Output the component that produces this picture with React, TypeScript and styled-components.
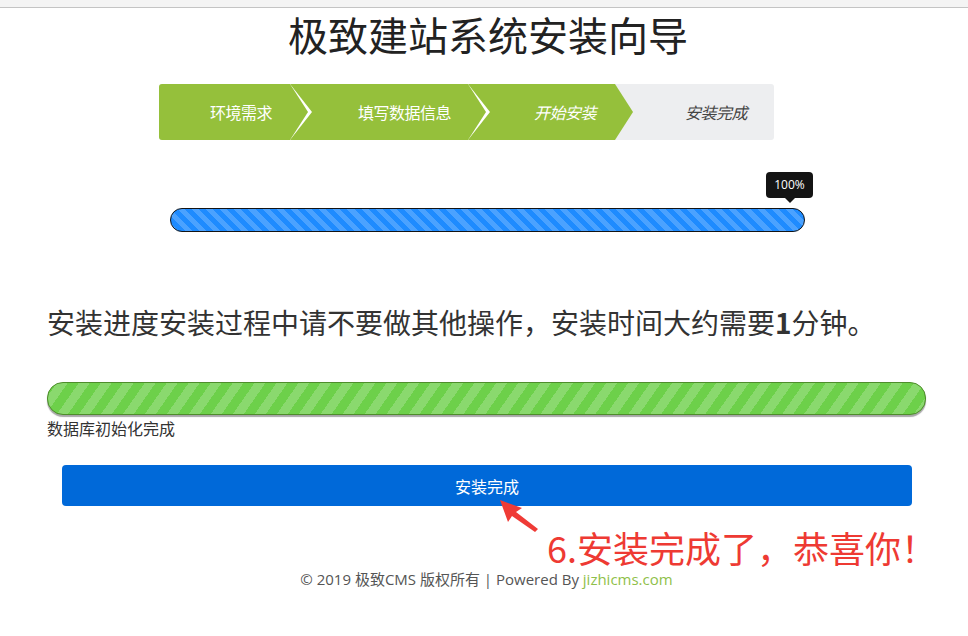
import React from 'react';
import styled, { createGlobalStyle } from 'styled-components';

const GlobalStyle = createGlobalStyle`
  html, body {
    margin: 0;
    padding: 0;
    background: #fff;
  }
  body {
    font-family: 'Open Sans', 'Noto Sans CJK SC', sans-serif;
    color: #333;
  }
`;

interface StepItem {
  label: string;
  width: number;
  padLeft: number;
  state: 'done' | 'current' | 'todo';
}

const steps: StepItem[] = [
  { label: '环境需求', width: 131, padLeft: 51, state: 'done' },
  { label: '填写数据信息', width: 178, padLeft: 68, state: 'done' },
  { label: '开始安装', width: 147, padLeft: 66, state: 'current' },
  { label: '安装完成', width: 159, padLeft: 70, state: 'todo' },
];

export default function App() {
  return (
    <Page>
      <GlobalStyle />
      <TopStrip />
      <Title>极致建站系统安装向导</Title>
      <Container>
        <StepBar>
          {steps.map((s, i) => (
            <Step
              key={s.label}
              $width={s.width}
              $padLeft={s.padLeft}
              $state={s.state}
              $layer={steps.length - i}
              $nextTodo={steps[i + 1]?.state === 'todo'}
            >
              {s.label}
            </Step>
          ))}
        </StepBar>

        <BlueTrack>
          <Tooltip>100%</Tooltip>
        </BlueTrack>

        <Notice>
          安装进度安装过程中请不要做其他操作，安装时间大约需要<strong>1</strong>分钟。
        </Notice>

        <GreenTrack />
        <StatusText>数据库初始化完成</StatusText>

        <FinishButton type='button'>安装完成</FinishButton>

        <Footer>
          © 2019 极致CMS 版权所有 | Powered By <FooterLink>jizhicms.com</FooterLink>
        </Footer>
      </Container>

      <Arrow width='60' height='50' viewBox='0 0 60 50'>
        <polygon points='0,0 22,8 16,12 38,29 35,32 12,16 8,22' fill='#ef3b36' />
      </Arrow>
      <Annotation>6.安装完成了，恭喜你！</Annotation>
    </Page>
  );
}

const Page = styled.div`
  position: relative;
  width: 968px;
  height: 636px;
  overflow: hidden;
`;

const TopStrip = styled.div`
  height: 7px;
  background: #f4f4f4;
  border-bottom: 1px solid #c4c4c4;
`;

const Title = styled.h1`
  margin: 2px 0 0;
  font-family: 'Noto Sans CJK SC', sans-serif;
  font-size: 40px;
  line-height: 48px;
  font-weight: 400;
  color: #222;
  text-align: center;
  padding-left: 8px;
`;

const Container = styled.div`
  width: 879px;
  margin-left: 47px;
  display: flex;
  flex-direction: column;
`;

const StepBar = styled.div`
  margin: 26px 0 0 112px;
  width: 615px;
  height: 56px;
  display: flex;
  border-radius: 3px;
  overflow: hidden;
  background: #edeef0;
`;

const Step = styled.div<{
  $width: number;
  $padLeft: number;
  $state: 'done' | 'current' | 'todo';
  $layer: number;
  $nextTodo: boolean;
}>`
  position: relative;
  flex: none;
  box-sizing: border-box;
  width: ${({ $width }) => $width}px;
  padding-left: ${({ $padLeft }) => $padLeft}px;
  display: flex;
  align-items: center;
  font-family: 'Noto Sans CJK SC', sans-serif;
  font-size: 16px;
  letter-spacing: -0.5px;
  font-style: ${({ $state }) => ($state === 'done' ? 'normal' : 'italic')};
  color: ${({ $state }) => ($state === 'todo' ? '#444' : '#fff')};
  background: ${({ $state }) => ($state === 'todo' ? 'transparent' : '#95c03b')};
  z-index: ${({ $layer }) => $layer};

  &::before,
  &::after {
    content: '';
    display: ${({ $state }) => ($state === 'todo' ? 'none' : 'block')};
    position: absolute;
    top: 0;
    height: 100%;
    clip-path: polygon(0 0, 100% 50%, 0 100%);
  }
  &::before {
    right: -22px;
    width: 22px;
    background: ${({ $nextTodo }) => ($nextTodo ? 'transparent' : '#fff')};
  }
  &::after {
    right: -18px;
    width: 18px;
    background: #95c03b;
  }
`;

const BlueTrack = styled.div`
  position: relative;
  margin: 68px 0 0 123px;
  width: 635px;
  height: 24px;
  box-sizing: border-box;
  border: 1px solid #141414;
  border-radius: 12px;
  background-color: #1e8bff;
  background-image: repeating-linear-gradient(
    45deg,
    rgba(255, 255, 255, 0.2) 0 5px,
    transparent 5px 10px
  );
`;

const Tooltip = styled.div`
  position: absolute;
  right: -9px;
  bottom: calc(100% + 11px);
  width: 47px;
  height: 26px;
  border-radius: 4px;
  background: #141414;
  color: #fff;
  font-family: 'Open Sans', sans-serif;
  font-size: 12px;
  line-height: 26px;
  text-align: center;

  &::after {
    content: '';
    position: absolute;
    left: 50%;
    top: 100%;
    margin-left: -5px;
    border: 5px solid transparent;
    border-bottom: 0;
    border-top-color: #141414;
  }
`;

const Notice = styled.h3`
  margin: 71px 0 0;
  font-family: 'Noto Sans CJK SC', sans-serif;
  font-size: 28px;
  line-height: 38px;
  font-weight: 400;
  color: #333;
  white-space: nowrap;

  strong {
    font-weight: 700;
  }
`;

const GreenTrack = styled.div`
  margin-top: 41px;
  height: 33px;
  box-sizing: border-box;
  border: 1px solid #4e8d2b;
  border-radius: 16px;
  box-shadow: 0 2px 1px rgba(0, 0, 0, 0.35);
  background-color: #6dd04a;
  background-image: repeating-linear-gradient(
    -55deg,
    rgba(255, 255, 255, 0.2) 0 9px,
    transparent 9px 18px
  );
`;

const StatusText = styled.div`
  margin-top: 3px;
  font-family: 'Noto Sans CJK SC', sans-serif;
  font-size: 16px;
  line-height: 20px;
  color: #333;
`;

const FinishButton = styled.button`
  margin: 27px 14px 0 15px;
  height: 41px;
  border: none;
  border-radius: 4px;
  background: #0069d9;
  color: #fff;
  font-family: 'Noto Sans CJK SC', sans-serif;
  font-size: 16px;
  cursor: pointer;
`;

const Footer = styled.div`
  margin-top: 64px;
  text-align: center;
  font-family: 'Open Sans', 'Noto Sans CJK SC', sans-serif;
  font-size: 15px;
  line-height: 18px;
  color: #555;
`;

const FooterLink = styled.a`
  color: #8fbf4a;
  text-decoration: none;
`;

const Arrow = styled.svg`
  position: absolute;
  left: 500px;
  top: 500px;
`;

const Annotation = styled.div`
  position: absolute;
  left: 547px;
  top: 531px;
  font-family: 'Noto Sans CJK SC', sans-serif;
  font-size: 36px;
  line-height: 32px;
  color: #ee3a33;
  white-space: nowrap;
`;
